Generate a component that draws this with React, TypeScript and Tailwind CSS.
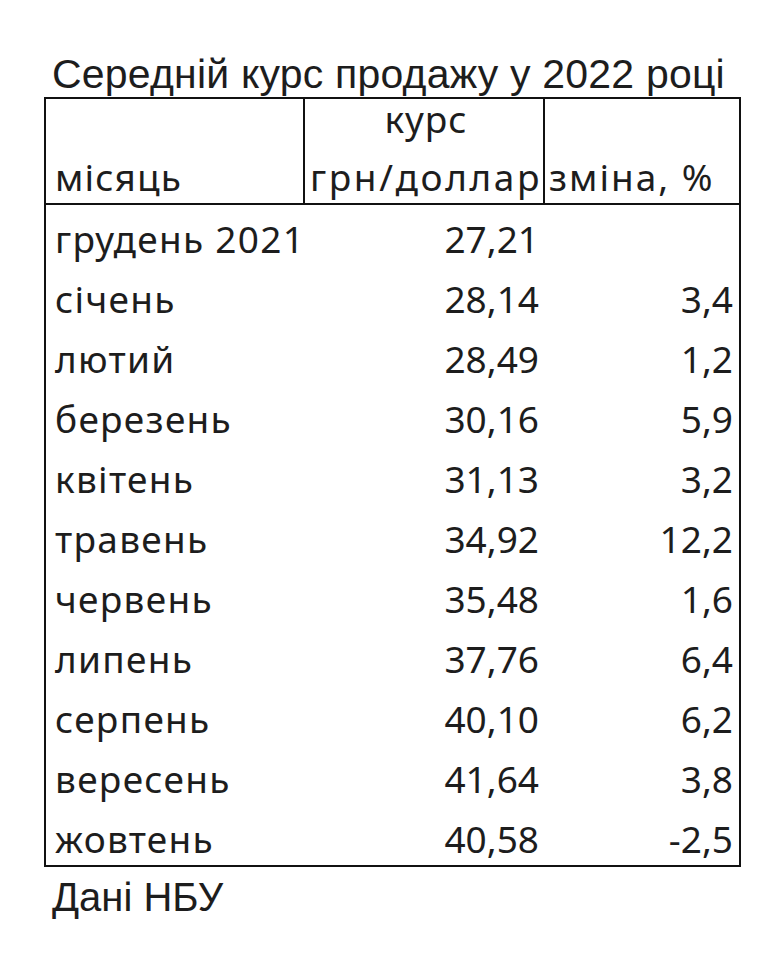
const rows = [
  ['грудень 2021', '27,21', ''],
  ['січень', '28,14', '3,4'],
  ['лютий', '28,49', '1,2'],
  ['березень', '30,16', '5,9'],
  ['квітень', '31,13', '3,2'],
  ['травень', '34,92', '12,2'],
  ['червень', '35,48', '1,6'],
  ['липень', '37,76', '6,4'],
  ['серпень', '40,10', '6,2'],
  ['вересень', '41,64', '3,8'],
  ['жовтень', '40,58', '-2,5'],
]

const App = () => {
  return (
    <div className="w-[782px] h-[959px] bg-white text-[#1d1d1d]">
      <div className="pl-[44px] pt-[54px]">
        <div className="h-[43px] pl-[8px] font-['Liberation_Sans',Arial,sans-serif] text-[41px] leading-[40px] tracking-[0.2px] whitespace-nowrap">
          Середній курс продажу у 2022 році
        </div>

        <div className="w-[697px] border-2 border-[#111] font-['Noto_Sans','Open_Sans',sans-serif] text-[37px]">
          <div className="flex h-[106px] border-b-2 border-[#111]">
            <div className="w-[259px] border-r-2 border-[#111] flex flex-col justify-end pb-[3px] pl-[9px] leading-[46px] tracking-[1.2px]">
              місяць
            </div>
            <div className="w-[240px] border-r-2 border-[#111] flex flex-col justify-end items-center pb-[3px] pl-[4px] leading-[46px] whitespace-nowrap">
              <div className="mb-[12px] tracking-[1px]">курс</div>
              <div className="tracking-[2.6px]">грн/доллар</div>
            </div>
            <div className="w-[192px] flex flex-col justify-end pb-[3px] pl-[4px] leading-[46px] tracking-[2px] whitespace-nowrap">
              зміна, %
            </div>
          </div>

          {rows.map(([month, rate, change]) => (
            <div key={month} className="flex h-[60px] leading-[52px]">
              <div className="w-[259px] pl-[9px] pt-[8px] tracking-[1.3px] whitespace-nowrap">{month}</div>
              <div className="w-[240px] pr-[6px] pt-[8px] text-right">{rate}</div>
              <div className="w-[192px] pr-[4px] pt-[8px] text-right">{change}</div>
            </div>
          ))}
        </div>

        <div className="mt-[10px] pl-[8px] font-['Liberation_Sans',Arial,sans-serif] text-[40px] leading-[40px]">
          Дані НБУ
        </div>
      </div>
    </div>
  )
}

export default App
